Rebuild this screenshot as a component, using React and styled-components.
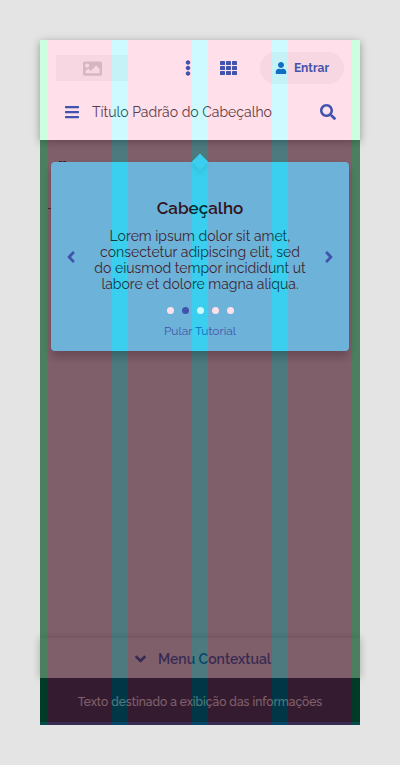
import React from "react";
import styled, { createGlobalStyle } from "styled-components";
import {
  FaAngleDown, FaAngleLeft, FaAngleRight, FaBars,
  FaEllipsisV, FaImage, FaSearch, FaUser,
} from "react-icons/fa";

const GlobalStyle = createGlobalStyle`
  *, *::before, *::after { box-sizing: border-box; }
  body {
    margin: 0;
    background: #e4e4e4;
    color: #333;
    font-family: Raleway, Lato, "Open Sans", sans-serif;
  }
  button { font: inherit; border: 0; padding: 0; background: none; cursor: pointer; }
  h1, h2, p { margin: 0; }
`;

const Page = styled.div`
  min-height: 100vh;
  padding: 40px;
  display: flex;
`;

const Screen = styled.div`
  position: relative;
  isolation: isolate;
  flex: 1;
  min-width: 0;
  display: flex;
  flex-direction: column;
  background: #fff;
`;

const Header = styled.header`
  position: relative;
  z-index: 3;
  display: flex;
  flex-direction: column;
  gap: 12px;
  padding: 12px 16px;
  background: #fff;
  box-shadow: 0 2px 8px rgba(0, 0, 0, 0.35);
`;

const HeaderRow = styled.div`
  display: flex;
  align-items: center;
  height: 32px;
  gap: ${({ $gap }) => $gap}px;
`;

const Logo = styled.div`
  display: flex;
  align-items: center;
  justify-content: center;
  width: 72px;
  height: 26px;
  margin-right: auto;
  background: #f5f5f5;
  color: #ccc;
  font-size: 19px;
`;

const IconButton = styled.button`
  display: flex;
  align-items: center;
  justify-content: center;
  flex: none;
  width: 32px;
  height: 32px;
  color: #1351b4;
  && { font-size: ${({ $size = 16 }) => $size}px; }
  line-height: 0;
`;

const SignIn = styled.button`
  display: flex;
  align-items: center;
  justify-content: center;
  gap: 7px;
  width: 84px;
  height: 32px;
  margin-left: 8px;
  border-radius: 16px;
  && { background: #f5f5f5; font-size: 12px; font-weight: 700; }
  color: #1351b4;
`;

const Title = styled.h1`
  flex: 1;
  font-size: 14px;
  line-height: 20px;
  font-weight: 400;
  white-space: nowrap;
`;

const Main = styled.main`
  flex: 1;
  padding: 22px 11px;
`;

const PageMarks = styled.svg`
  position: absolute;
  left: 8px;
  top: 120px;
  width: 24px;
  height: 52px;
`;

const Scrim = styled.div`
  position: absolute;
  inset: 0;
  z-index: 1;
  background: rgba(0, 0, 0, 0.625);
  pointer-events: none;
`;

const TourCard = styled.section`
  position: relative;
  z-index: 2;
  display: grid;
  grid-template-columns: 40px 1fr 40px;
  align-items: center;
  padding: 36px 0 12px;
  border-radius: 4px;
  background: #49c9eb;
  box-shadow: 0 6px 10px rgba(0, 0, 0, 0.3);
`;

const Arrow = styled.span`
  position: absolute;
  top: -6px;
  left: calc(50% - 6px);
  width: 12px;
  height: 12px;
  background: #49c9eb;
  transform: rotate(45deg);
  box-shadow: 2px 2px 6px rgba(0, 0, 0, 0.12);
`;

const StepButton = styled(IconButton)`
  width: 40px;
  margin-top: -24px;
`;

const TourBody = styled.div`
  display: flex;
  flex-direction: column;
  align-items: center;
  text-align: center;
`;

const TourTitle = styled.h2`
  margin-bottom: 10px;
  font-size: 17px;
  line-height: 20px;
  font-weight: 600;
  color: #000;
`;

const TourText = styled.p`
  font-size: 14px;
  line-height: 16px;
  font-weight: 400;
  color: #111;
  white-space: nowrap;
`;

const Dots = styled.div`
  display: flex;
  gap: 8px;
  margin: 15px 0 9px;
`;

const Dot = styled.button`
  width: 7px;
  height: 7px;
  border-radius: 50%;
  && { background: ${({ $active }) => ($active ? "#1351b4" : "#fff")}; }
`;

const SkipButton = styled.button`
  && { font-size: 12px; line-height: 16px; }
  color: #1351b4;
`;

const ContextMenu = styled.button`
  display: flex;
  align-items: center;
  justify-content: center;
  gap: 12px;
  height: 40px;
  && {
    padding: 2px 0 0 6px;
    background: #fff;
    font-size: 14px;
    font-weight: 600;
  }
  color: #1351b4;
  box-shadow: 0 0 8px rgba(0, 0, 0, 0.25);
  svg { font-size: 18px; width: 11px; }
`;

const Footer = styled.footer`
  position: relative;
  height: 47px;
  border-bottom: 3px solid #1351b4;
  background: #071d41;
  color: #fff;
  font-size: 12px;
  line-height: 48px;
  font-weight: 500;
  text-align: center;
  white-space: nowrap;
`;

const GridOverlay = styled.div`
  position: absolute;
  inset: 0;
  z-index: 4;
  display: grid;
  grid-template-columns: 8px 1fr 16px 1fr 16px 1fr 16px 1fr 8px;
  pointer-events: none;
`;

const tracks = {
  margin: "rgba(0, 255, 100, 0.2)",
  column: "rgba(255, 95, 145, 0.2)",
  gutter: "rgba(0, 230, 255, 0.2)",
};

const Track = styled.div`
  background: ${({ $kind }) => tracks[$kind]};
`;

const gridTracks = [
  "margin", "column", "gutter", "column", "gutter", "column", "gutter", "column", "margin",
];

function AppsIcon() {
  return (
    <svg width="17" height="14" viewBox="0 0 17 14" fill="currentColor" aria-hidden="true">
      {[0, 5, 10].map((y) =>
        [0, 6, 12].map((x) => (
          <rect key={`${x}-${y}`} x={x} y={y} width="5" height="4" rx="0.4" />
        ))
      )}
    </svg>
  );
}

export default function App() {
  return (
    <>
      <GlobalStyle />
      <Page>
        <Screen>
          <Header>
            <HeaderRow $gap={8}>
              <Logo><FaImage aria-hidden="true" /></Logo>
              <IconButton aria-label="Mais opções"><FaEllipsisV /></IconButton>
              <IconButton aria-label="Aplicativos"><AppsIcon /></IconButton>
              <SignIn><FaUser aria-hidden="true" />Entrar</SignIn>
            </HeaderRow>
            <HeaderRow $gap={4}>
              <IconButton aria-label="Menu"><FaBars /></IconButton>
              <Title>Título Padrão do Cabeçalho</Title>
              <IconButton aria-label="Buscar"><FaSearch /></IconButton>
            </HeaderRow>
          </Header>
          <Main>
            <PageMarks viewBox="0 0 24 52" aria-hidden="true">
              <path d="M11 1.5h3M15 1.5h3M0 48.5h3" stroke="#333" strokeWidth="1" />
            </PageMarks>
            <TourCard>
              <Arrow />
              <StepButton $size={18} aria-label="Anterior"><FaAngleLeft /></StepButton>
              <TourBody>
                <TourTitle>Cabeçalho</TourTitle>
                <TourText>
                  Lorem ipsum dolor sit amet,<br />
                  consectetur adipiscing elit, sed<br />
                  do eiusmod tempor incididunt ut<br />
                  labore et dolore magna aliqua.
                </TourText>
                <Dots>
                  {[0, 1, 2, 3, 4].map((step) => (
                    <Dot key={step} $active={step === 1} aria-label={`Passo ${step + 1}`} />
                  ))}
                </Dots>
                <SkipButton>Pular Tutorial</SkipButton>
              </TourBody>
              <StepButton $size={18} aria-label="Próximo"><FaAngleRight /></StepButton>
            </TourCard>
          </Main>
          <ContextMenu><FaAngleDown aria-hidden="true" />Menu Contextual</ContextMenu>
          <Footer>Texto destinado a exibição das informações</Footer>
          <Scrim />
          <GridOverlay aria-hidden="true">
            {gridTracks.map((kind, index) => <Track key={index} $kind={kind} />)}
          </GridOverlay>
        </Screen>
      </Page>
    </>
  );
}
